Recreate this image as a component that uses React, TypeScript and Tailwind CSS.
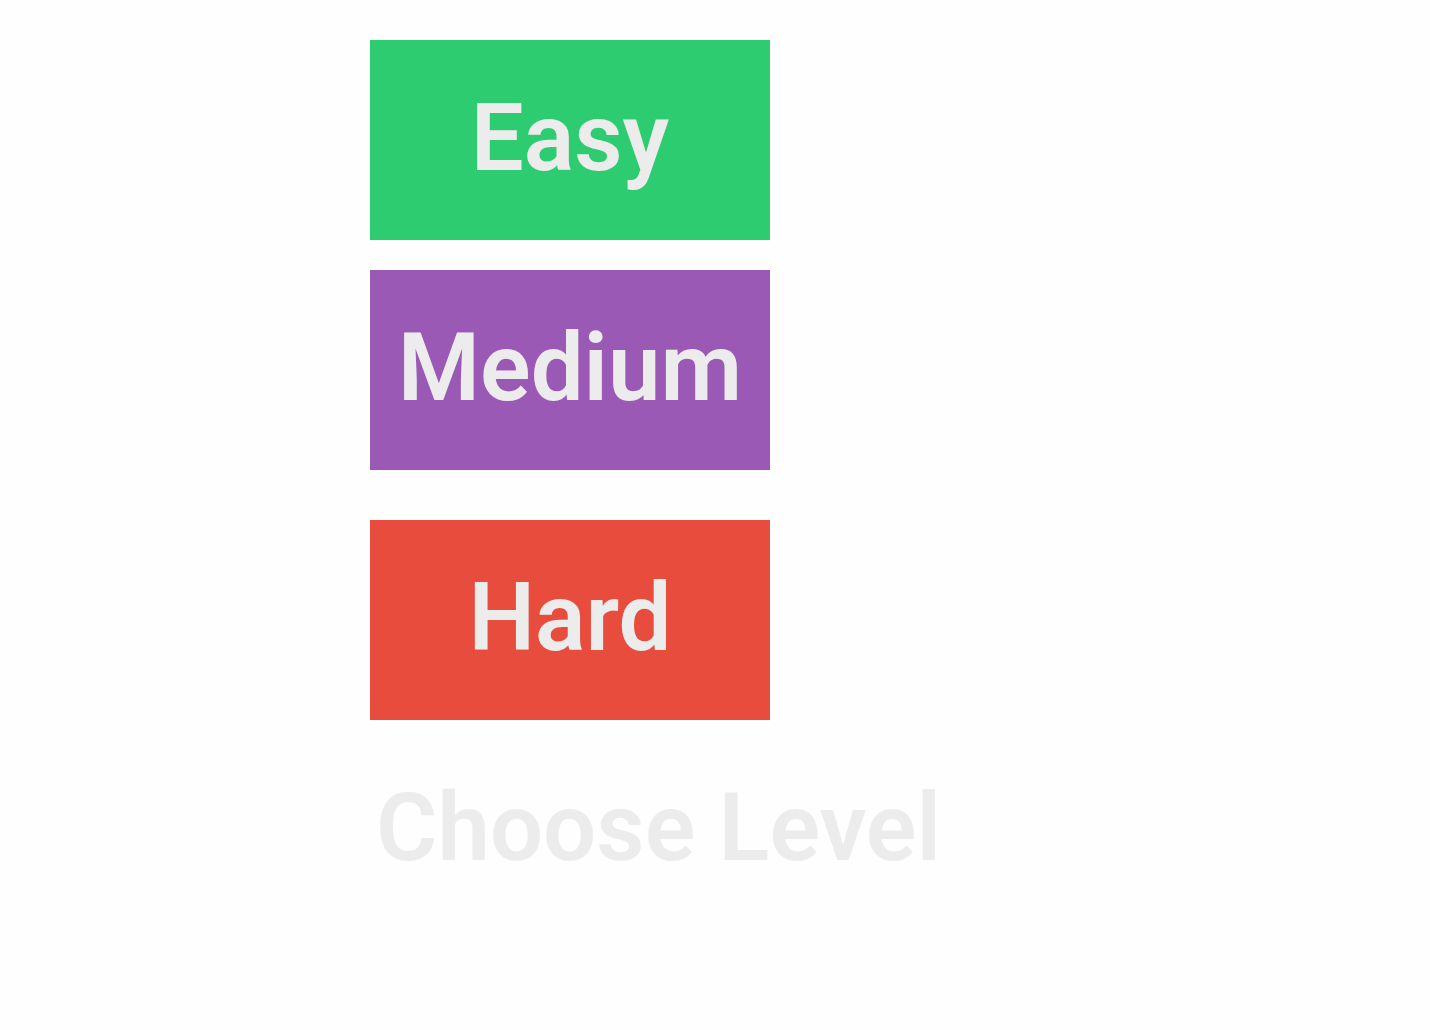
const levels = [
  { name: "Easy", style: "bg-[#2ecc71]" },
  { name: "Medium", style: "mt-[30px] bg-[#9b59b6]" },
  { name: "Hard", style: "mt-[50px] bg-[#e74c3c]" },
];

export default function App() {
  return (
    <main className="min-h-screen bg-[#fefefe] pt-10 pl-[370px] font-['Roboto',sans-serif] text-[94px] leading-[94px] font-semibold text-[#ececec]">
      <div className="flex w-[400px] flex-col">
        {levels.map((level) => (
          <button
            key={level.name}
            type="button"
            className={`flex h-[200px] items-center justify-center pb-1 ${level.style}`}
          >
            {level.name}
          </button>
        ))}
      </div>
      <h1 className="mt-[61px] pl-1.5 whitespace-nowrap">Choose Level</h1>
    </main>
  );
}
